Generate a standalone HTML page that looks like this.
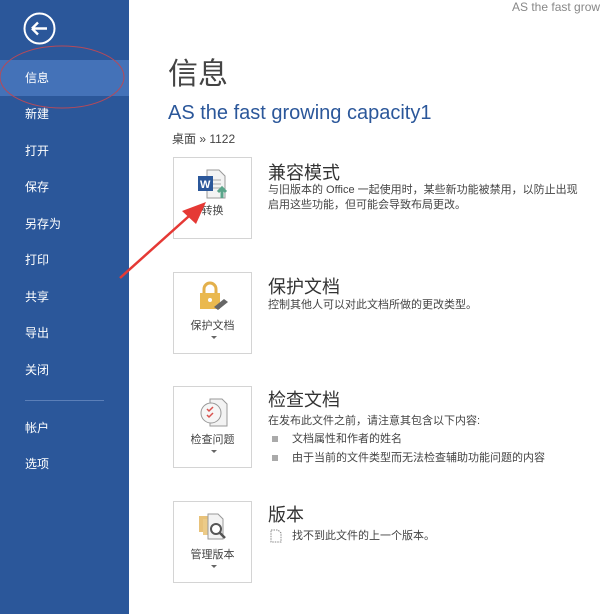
<!DOCTYPE html>
<html><head><meta charset="utf-8"><style>
*{margin:0;padding:0;box-sizing:border-box}
body{width:600px;height:614px;overflow:hidden;background:#fff;font-family:"Liberation Sans","Noto Sans CJK SC",sans-serif;position:relative}
.side{position:absolute;left:0;top:0;width:129px;height:614px;background:#2b579a}
.side .it{position:absolute;left:0;width:129px;height:36px;line-height:36px;padding-left:25px;color:#fff;font-size:12px}
.sel{background:#4472b8}
.abs{position:absolute}
.box{position:absolute;left:173px;width:79px;height:82px;border:1px solid #d4d4d4;background:#fff}
.box .lb{position:absolute;top:44px;width:100%;text-align:center;font-size:11px;color:#444}
.box .ar{position:absolute;top:63px;left:37px;width:0;height:0;border-left:3px solid transparent;border-right:3px solid transparent;border-top:3px solid #666}
.t{position:absolute;left:268px;font-size:18px;color:#333}
.d{position:absolute;left:268px;font-size:11px;color:#444;line-height:15px;white-space:nowrap}
</style></head><body>
<div class="side">
<svg class="abs" style="left:23px;top:12px" width="33" height="33"><circle cx="16.5" cy="16.5" r="15" fill="none" stroke="#fff" stroke-width="2"/><path d="M9 16.5H24M9 16.5l6-6M9 16.5l6 6" stroke="#fff" stroke-width="2.4" fill="none"/></svg>
<div class="it sel" style="top:60px">信息</div>
<div class="it" style="top:96px">新建</div>
<div class="it" style="top:133px">打开</div>
<div class="it" style="top:169px">保存</div>
<div class="it" style="top:206px">另存为</div>
<div class="it" style="top:242px">打印</div>
<div class="it" style="top:279px">共享</div>
<div class="it" style="top:315px">导出</div>
<div class="it" style="top:352px">关闭</div>
<div class="abs" style="left:25px;top:400px;width:79px;height:1px;background:#5b7fb8"></div>
<div class="it" style="top:410px">帐户</div>
<div class="it" style="top:446px">选项</div>
</div>
<svg class="abs" style="left:0;top:45px" width="130" height="65"><ellipse cx="62" cy="32" rx="62" ry="31" fill="none" stroke="#b44a5a" stroke-width="1"/></svg>
<div class="abs" style="left:512px;top:0;font-size:12px;color:#888;white-space:nowrap">AS the fast growi</div>
<div class="abs" style="left:168px;top:49px;font-size:30px;color:#444">信息</div>
<div class="abs" style="left:168px;top:102px;font-size:20px;color:#2b579a">AS the fast growing capacity1</div>
<div class="abs" style="left:172px;top:130px;font-size:12px;color:#444">桌面 » 1122</div>

<div class="box" style="top:157px">
<svg class="abs" style="left:22px;top:10px" width="36" height="32"><path d="M11 2h12l6 6v22H11z" fill="#f3f3f3" stroke="#999"/><path d="M15 12h10M15 16h10M15 20h10" stroke="#aaa"/><rect x="2" y="8" width="15" height="15" fill="#2b579a"/><text x="4" y="20" font-size="11" fill="#fff" font-weight="bold" font-family="Liberation Sans">W</text><path d="M26 30V20M22 24l4-4 4 4" stroke="#5aa58a" stroke-width="3" fill="none"/></svg>
<div class="lb">转换</div></div>
<div class="t" style="top:159px">兼容模式</div>
<div class="d" style="top:183px">与旧版本的 Office 一起使用时，某些新功能被禁用，以防止出现<br>启用这些功能，但可能会导致布局更改。</div>

<div class="box" style="top:272px">
<svg class="abs" style="left:22px;top:8px" width="36" height="34"><path d="M8 12V8a6 6 0 0 1 12 0v4" stroke="#e3b04b" stroke-width="3" fill="none"/><rect x="4" y="12" width="20" height="16" fill="#eab94f"/><circle cx="14" cy="19" r="2" fill="#fff"/><path d="M18 26l10-8 4 3-10 8z" fill="#666"/></svg>
<div class="lb">保护文档</div><div class="ar"></div></div>
<div class="t" style="top:273px">保护文档</div>
<div class="d" style="top:298px">控制其他人可以对此文档所做的更改类型。</div>

<div class="box" style="top:386px">
<svg class="abs" style="left:22px;top:8px" width="36" height="34"><path d="M14 4h12l5 5v22H14z" fill="#f3f3f3" stroke="#999"/><circle cx="15" cy="18" r="10" fill="#f6f6f6" stroke="#999"/><path d="M11 14l2 2 4-4M11 20l2 2 4-4" stroke="#d9534f" stroke-width="1.5" fill="none"/></svg>
<div class="lb">检查问题</div><div class="ar"></div></div>
<div class="t" style="top:386px">检查文档</div>
<div class="d" style="top:414px">在发布此文件之前，请注意其包含以下内容:</div>
<div class="abs" style="left:272px;top:436px;width:6px;height:6px;background:#aaa"></div>
<div class="d" style="left:292px;top:432px">文档属性和作者的姓名</div>
<div class="abs" style="left:272px;top:455px;width:6px;height:6px;background:#aaa"></div>
<div class="d" style="left:292px;top:451px">由于当前的文件类型而无法检查辅助功能问题的内容</div>

<div class="box" style="top:501px">
<svg class="abs" style="left:22px;top:8px" width="36" height="34"><rect x="3" y="6" width="12" height="16" fill="#e8c27a"/><rect x="7" y="9" width="12" height="16" fill="#eccb88"/><path d="M12 4h10l5 5v20H12z" fill="#f3f3f3" stroke="#999"/><circle cx="20" cy="19" r="5" fill="#fff" stroke="#555" stroke-width="2"/><path d="M24 23l5 5" stroke="#555" stroke-width="2.5"/></svg>
<div class="lb">管理版本</div><div class="ar"></div></div>
<div class="t" style="top:501px">版本</div>
<svg class="abs" style="left:270px;top:529px" width="12" height="14"><path d="M1 1h7l3 3v9H1z" fill="none" stroke="#888" stroke-dasharray="1.5 1"/></svg>
<div class="d" style="left:292px;top:529px">找不到此文件的上一个版本。</div>

<svg class="abs" style="left:110px;top:190px" width="100" height="100"><path d="M10 88L88 18" stroke="#e53935" stroke-width="2.5"/><path d="M96 12L72 21 86 34z" fill="#e53935"/></svg>
</body></html>
